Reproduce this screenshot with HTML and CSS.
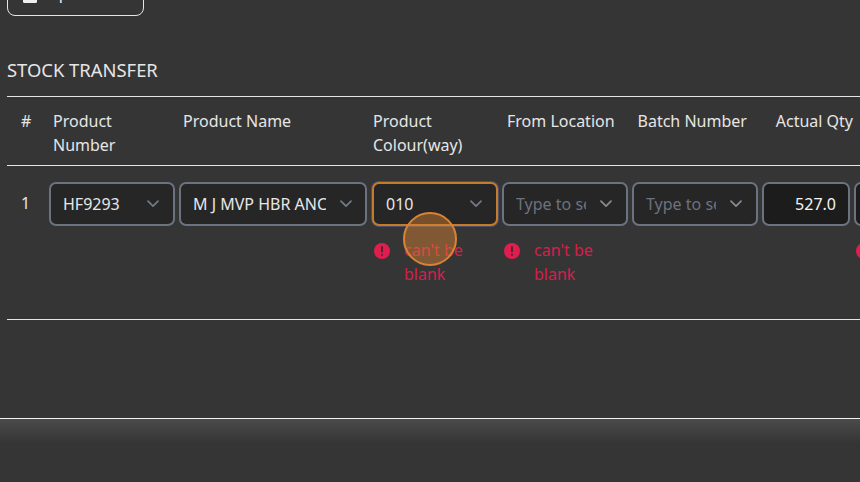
FILE: index.html
```html
<!DOCTYPE html>
<html lang="en">
<head>
<meta charset="utf-8">
<title>Stock Transfer</title>
<link rel="stylesheet" href="styles.css">
</head>
<body>
<svg class="defs" aria-hidden="true">
  <symbol id="chevron" viewBox="0 0 12 8"><path d="M1 1.2l5 5 5-5" fill="none" stroke="currentColor" stroke-width="1.7" stroke-linecap="round" stroke-linejoin="round"/></symbol>
  <symbol id="alert" viewBox="0 0 16 16"><circle cx="8" cy="8" r="8" fill="#e11d50"/><path d="M8 4v4.6M8 11.6v.3" stroke="#4a2430" stroke-width="1.8" stroke-linecap="round"/></symbol>
</svg>
<main class="page">
  <button class="action"><svg width="14" height="16" viewBox="0 0 14 16"><rect width="14" height="16" rx="1.5" fill="currentColor"/></svg><span>Update</span></button>
  <h2 class="title">STOCK TRANSFER</h2>
  <div class="table">
    <div class="row head">
      <div class="num">#</div>
      <div>Product Number</div>
      <div>Product Name</div>
      <div>Product Colour(way)</div>
      <div>From Location</div>
      <div>Batch Number</div>
      <div class="right">Actual Qty</div>
    </div>
    <div class="row body">
      <div class="num">1</div>
      <div class="cell"><div class="field"><span>HF9293</span><svg><use href="#chevron"/></svg></div></div>
      <div class="cell name"><div class="field"><span>M J MVP HBR ANC</span><svg><use href="#chevron"/></svg></div></div>
      <div class="cell">
        <div class="field focus"><span>010</span><svg><use href="#chevron"/></svg></div>
        <div class="error"><svg><use href="#alert"/></svg><span>can't be blank</span></div>
        <i class="click"></i>
      </div>
      <div class="cell">
        <div class="field empty"><span>Type to search</span><svg><use href="#chevron"/></svg></div>
        <div class="error"><svg><use href="#alert"/></svg><span>can't be blank</span></div>
      </div>
      <div class="cell"><div class="field empty"><span>Type to search</span><svg><use href="#chevron"/></svg></div></div>
      <div class="cell"><div class="field qty"><span>527.0</span></div></div>
      <div class="cell">
        <div class="field qty"></div>
        <div class="error"><svg><use href="#alert"/></svg></div>
      </div>
    </div>
  </div>
</main>
<footer class="footer"></footer>
</body>
</html>
```
FILE: styles.css
```css
* { box-sizing: border-box; }
body {
  margin: 0;
  height: 482px;
  overflow: hidden;
  background: #353535;
  color: #e6e6e6;
  font: 16px/24px "Noto Sans", sans-serif;
}
.defs { display: none; }
.page { height: 418px; padding-left: 7px; overflow: hidden; }
.action {
  display: flex;
  align-items: center;
  gap: 10px;
  width: 137px;
  height: 46px;
  margin: -30px 0 0;
  padding: 0 15px;
  border: 1px solid #e6e6e6;
  border-radius: 8px;
  background: none;
  color: #f0f0f0;
  font: inherit;
}
.action svg { margin-top: 4px; }
.title { margin: 40px 0 0; font-size: 18.4px; font-weight: 400; line-height: 28px; }
.table { width: 980px; margin-top: 12px; border-top: 1px solid #e6e6e6; }
.row { display: grid; border-bottom: 1px solid #e6e6e6; }
.head {
  grid-template-columns: 40px 130px 190px 134px 130.5px 129.5px 98px;
  height: 69px;
  padding-top: 12px;
}
.head > div { padding: 0 6px; }
.head > .num, .num { padding: 0 0 0 14px; }
.right { text-align: right; }
.body {
  grid-template-columns: 40px 130px 193px 130px 130px 130px 92px 130px;
  height: 154px;
  padding-top: 16px;
}
.body > .num { padding-top: 9px; }
.cell { position: relative; padding: 0 2px; }
.name { padding-right: 3px; }
.name .field { padding-right: 13px; }
.field {
  display: flex;
  align-items: center;
  justify-content: space-between;
  height: 44px;
  padding: 0 14px 0 12px;
  border: 2px solid #6b7280;
  border-radius: 7px;
  background: #262626;
}
.field span { flex: 1; overflow: hidden; white-space: nowrap; }
.field svg { flex: none; width: 12px; height: 8px; margin-left: 14px; color: #747985; }
.empty { color: #6b7280; }
.empty svg { color: #878b94; }
.focus { border-color: #c57a2c; box-shadow: 0 0 0 1px #4b5068; }
.qty { padding: 0 12px; background: #1c1c1c; color: #f4f4f4; text-align: right; }
.error { display: flex; margin-top: 12px; color: #d41f4d; }
.error svg { flex: none; width: 16px; height: 16px; margin: 4.5px 14.5px 0 1.5px; }
.click {
  position: absolute;
  left: 32.5px;
  top: 30px;
  width: 54px;
  height: 54px;
  border: 2px solid #d98336;
  border-radius: 50%;
  background: rgba(220, 130, 52, .45);
}
.footer { height: 64px; border-top: 1px solid #f2f2f2; background: linear-gradient(#4b4b4b, #353535 24px); }
```
